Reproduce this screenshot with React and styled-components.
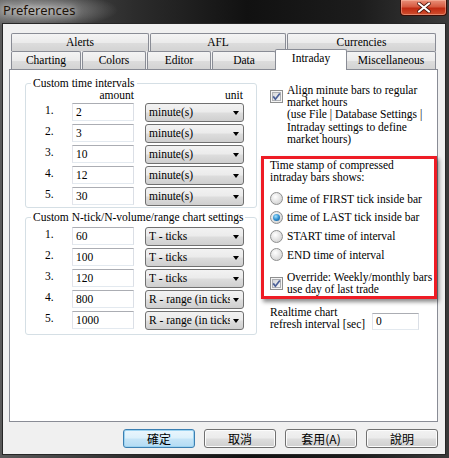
import React from 'react';
import styled, { createGlobalStyle } from 'styled-components';

const GlobalStyle = createGlobalStyle`
  html, body {
    margin: 0;
    padding: 0;
    background: #000;
  }
  * {
    box-sizing: border-box;
  }
`;

const serif = `"Liberation Serif", "Times New Roman", serif`;
const cjk = `"Noto Sans CJK TC", "Noto Sans CJK SC", sans-serif`;

const timeRows = [
  { n: '1.', amount: '2', unit: 'minute(s)' },
  { n: '2.', amount: '3', unit: 'minute(s)' },
  { n: '3.', amount: '10', unit: 'minute(s)' },
  { n: '4.', amount: '12', unit: 'minute(s)' },
  { n: '5.', amount: '30', unit: 'minute(s)' },
];

const tickRows = [
  { n: '1.', amount: '60', unit: 'T - ticks' },
  { n: '2.', amount: '100', unit: 'T - ticks' },
  { n: '3.', amount: '120', unit: 'T - ticks' },
  { n: '4.', amount: '800', unit: 'R - range (in ticks)' },
  { n: '5.', amount: '1000', unit: 'R - range (in ticks)' },
];

const topTabs = [
  { label: 'Alerts', width: 138 },
  { label: 'AFL', width: 136 },
  { label: 'Currencies', width: 149 },
];

const bottomTabs = [
  { label: 'Charting', width: 70 },
  { label: 'Colors', width: 64 },
  { label: 'Editor', width: 64 },
  { label: 'Data', width: 64 },
  { label: 'Intraday', width: 68, active: true },
  { label: 'Miscellaneous', width: 90 },
];

const radios = [
  { label: 'time of FIRST tick inside bar' },
  { label: 'time of LAST tick inside bar', checked: true },
  { label: 'START time of interval' },
  { label: 'END time of interval' },
];

const CheckBox = () => (
  <CheckIcon width="13" height="13" viewBox="0 0 13 13">
    <defs>
      <linearGradient id="cbfill" x1="0" y1="0" x2="1" y2="1">
        <stop offset="0" stopColor="#d4d6d8" />
        <stop offset="1" stopColor="#f8f8f8" />
      </linearGradient>
    </defs>
    <rect x="0.5" y="0.5" width="12" height="12" fill="#f4f4f4" stroke="#8e8f8f" />
    <rect x="2.5" y="2.5" width="8" height="8" fill="url(#cbfill)" stroke="#aeb0b4" />
    <path d="M3.2 6.4 L5.4 9.2 L9.8 3.4" fill="none" stroke="#4a5f97" strokeWidth="1.7" />
  </CheckIcon>
);

const Select = ({ value }) => (
  <SelectBox>
    <SelectText>{value}</SelectText>
    <Arrow />
  </SelectBox>
);

const Group = ({ title, rows, showHeader, tight }) => (
  <Fieldset $tight={tight}>
    <Legend>{title}</Legend>
    {showHeader && (
      <HeaderRow>
        <HeadAmount>amount</HeadAmount>
        <HeadUnit>unit</HeadUnit>
      </HeaderRow>
    )}
    <Rows $header={showHeader}>
      {rows.map((r) => (
        <Row key={r.n}>
          <NumLabel>{r.n}</NumLabel>
          <TextBox>{r.amount}</TextBox>
          <Select value={r.unit} />
        </Row>
      ))}
    </Rows>
  </Fieldset>
);

const App = () => {
  return (
    <>
      <GlobalStyle />
      <Window>
        <TitleBar>
          <Title>Preferences</Title>
          <CloseButton>
            <svg width="14" height="11" viewBox="0 0 14 11">
              <path d="M2 1.5 L12 9.5 M12 1.5 L2 9.5" stroke="#4a1208" strokeWidth="3.6" strokeLinecap="round" />
              <path d="M2 1.5 L12 9.5 M12 1.5 L2 9.5" stroke="#fff" strokeWidth="2.2" strokeLinecap="round" />
            </svg>
          </CloseButton>
        </TitleBar>
        <Body>
          <TabStrip>
            <TabRow>
              {topTabs.map((t) => (
                <Tab key={t.label} $width={t.width}>{t.label}</Tab>
              ))}
            </TabRow>
            <TabRow>
              {bottomTabs.map((t) => (
                <Tab key={t.label} $width={t.width} $active={t.active}>{t.label}</Tab>
              ))}
            </TabRow>
          </TabStrip>
          <Panel>
            <LeftColumn>
              <Group title="Custom time intervals" rows={timeRows} showHeader tight />
              <Group title="Custom N-tick/N-volume/range chart settings" rows={tickRows} />
            </LeftColumn>
            <RightColumn>
              <CheckRow $indent>
                <CheckBox />
                <Label>Align minute bars to regular<br />market hours</Label>
              </CheckRow>
              <Note>(use File | Database Settings |<br />Intraday settings to define<br />market hours)</Note>
              <Highlight>
                <Label>Time stamp of compressed<br />intraday bars shows:</Label>
                <RadioList>
                  {radios.map((r) => (
                    <RadioRow key={r.label}>
                      <Radio $checked={r.checked} />
                      <Label>{r.label}</Label>
                    </RadioRow>
                  ))}
                </RadioList>
                <CheckRow $override>
                  <CheckBox />
                  <Label>Override: Weekly/monthly bars<br />use day of last trade</Label>
                </CheckRow>
              </Highlight>
              <RefreshRow>
                <RefreshLabel>Realtime chart<br />refresh interval [sec]</RefreshLabel>
                <SmallBox>0</SmallBox>
              </RefreshRow>
            </RightColumn>
          </Panel>
          <ButtonRow>
            <Button $default>確定</Button>
            <Button>取消</Button>
            <Button>套用(A)</Button>
            <Button>說明</Button>
          </ButtonRow>
        </Body>
      </Window>
    </>
  );
};

const Window = styled.div`
  width: 449px;
  height: 458px;
  display: flex;
  flex-direction: column;
  background:
    radial-gradient(ellipse 80px 18px at 38px 10px, rgba(190, 190, 190, 0.75), rgba(120, 120, 120, 0) 100%),
    linear-gradient(to right, #5a5a5a 0%, #2c2c2c 30%, #111 55%, #1c1c1c 80%, #3a3a3a 100%);
  overflow: hidden;
`;

const TitleBar = styled.div`
  height: 23px;
  display: flex;
  justify-content: space-between;
  align-items: flex-start;
`;

const Title = styled.div`
  padding: 2px 0 0 3px;
  font-family: "Noto Sans", "Open Sans", sans-serif;
  font-size: 13px;
  line-height: 17px;
  color: #1d1208;
  text-shadow: 0 0 6px rgba(255, 255, 255, 0.7), 0 0 10px rgba(255, 255, 255, 0.5);
`;

const CloseButton = styled.div`
  width: 47px;
  height: 16px;
  margin-right: 2px;
  display: flex;
  align-items: center;
  justify-content: center;
  border: 1px solid #3a0d06;
  border-top: none;
  border-radius: 0 0 4px 4px;
  background: linear-gradient(#e9907a 0%, #d65a40 45%, #c02a12 55%, #d0502f 100%);
  box-shadow: inset 0 0 0 1px rgba(255, 200, 180, 0.45);
`;

const Body = styled.div`
  flex: 1;
  margin: 0 3px 3px 2px;
  border: 1px solid #262626;
  background: #f0f0f0;
  padding: 9px 6px 0 6px;
  display: flex;
  flex-direction: column;
`;

const TabStrip = styled.div`
  padding-left: 2px;
  display: flex;
  flex-direction: column;
`;

const TabRow = styled.div`
  display: flex;
  gap: 1px;
  height: 18px;
`;

const Tab = styled.div`
  position: relative;
  width: ${(p) => (p.$active ? p.$width + 4 : p.$width)}px;
  height: ${(p) => (p.$active ? 21 : 18)}px;
  margin: ${(p) => (p.$active ? '-2px -2px 0 -2px' : '0')};
  z-index: ${(p) => (p.$active ? 2 : 1)};
  border: 1px solid #898c95;
  border-bottom: none;
  border-radius: 2px 2px 0 0;
  background: ${(p) => (p.$active ? '#fff' : 'linear-gradient(#f4f4f4 0%, #ebebeb 50%, #dddddd 51%, #d3d3d3 100%)')};
  font-family: ${serif};
  font-size: 11.5px;
  line-height: 17px;
  text-align: center;
  color: #000;
`;

const Panel = styled.div`
  width: 429px;
  height: 353px;
  border: 1px solid #898c95;
  background: #fff;
  padding: 7px 0 0 15px;
  display: flex;
  gap: 4px;
  font-family: ${serif};
  font-size: 11.5px;
  color: #000;
`;

const LeftColumn = styled.div`
  width: 232px;
  display: flex;
  flex-direction: column;
  gap: 3px;
`;

const Fieldset = styled.fieldset`
  margin: 0;
  padding: 0 0 ${(p) => (p.$tight ? 1 : 4)}px 0;
  min-width: 0;
  border: 1px solid #d5dfe5;
  border-radius: 3px;
`;

const Legend = styled.legend`
  margin-left: 5px;
  padding: 0 2px;
  line-height: 12px;
`;

const HeaderRow = styled.div`
  display: flex;
  height: 12px;
  line-height: 12px;
  padding-left: 46px;
`;

const HeadAmount = styled.div`
  width: 62px;
  text-align: right;
`;

const HeadUnit = styled.div`
  width: 99px;
  margin-left: 11px;
  text-align: right;
  padding-right: 1px;
`;

const Rows = styled.div`
  display: flex;
  flex-direction: column;
  gap: 2px;
  margin-top: ${(p) => (p.$header ? 2 : 4)}px;
`;

const Row = styled.div`
  display: flex;
  align-items: flex-start;
  height: 19px;
  padding-left: 19px;
`;

const NumLabel = styled.div`
  width: 27px;
  line-height: 15px;
`;

const TextBox = styled.div`
  width: 62px;
  height: 18px;
  border: 1px solid #abadb3;
  border-color: #abadb3 #dbdfe6 #e3e9ef #e2e3ea;
  padding-left: 3px;
  line-height: 16px;
  background: #fff;
`;

const SelectBox = styled.div`
  width: 99px;
  height: 19px;
  margin-left: 11px;
  display: flex;
  align-items: center;
  border: 1px solid #707070;
  border-radius: 3px;
  background: linear-gradient(#f2f2f2 0%, #ebebeb 48%, #dddddd 52%, #cfcfcf 100%);
  padding-left: 3px;
`;

const SelectText = styled.div`
  flex: 1;
  overflow: hidden;
  white-space: nowrap;
  line-height: 17px;
`;

const Arrow = styled.div`
  width: 0;
  height: 0;
  margin: 1px 4px 0 3px;
  border-left: 3.5px solid transparent;
  border-right: 3.5px solid transparent;
  border-top: 4px solid #000;
`;

const RightColumn = styled.div`
  width: 176px;
  display: flex;
  flex-direction: column;
  padding-top: 7px;
`;

const CheckIcon = styled.svg`
  flex: none;
  display: block;
`;

const CheckRow = styled.div`
  display: flex;
  align-items: center;
  gap: 4px;
  margin-left: ${(p) => (p.$indent ? 9 : 0)}px;
  margin-top: ${(p) => (p.$override ? 7 : 0)}px;
`;

const Label = styled.div`
  line-height: 12px;
  white-space: nowrap;
`;

const Note = styled.div`
  margin-left: 26px;
  line-height: 12.5px;
  white-space: nowrap;
`;

const Highlight = styled.div`
  margin-top: 10px;
  border: 3px solid #ee1c25;
  padding: 0 0 1px 6px;
  box-shadow: 2px 3px 4px rgba(0, 0, 0, 0.45);
`;

const RadioList = styled.div`
  display: flex;
  flex-direction: column;
  margin-top: 7px;
`;

const RadioRow = styled.div`
  display: flex;
  align-items: center;
  gap: 4px;
  height: 18.67px;
`;

const Radio = styled.div`
  flex: none;
  width: 13px;
  height: 13px;
  border-radius: 50%;
  border: 1px solid #8e8f8f;
  background: radial-gradient(circle at 40% 35%, #ffffff 0%, #e6e6e6 45%, #c8c8c8 100%);
  display: flex;
  align-items: center;
  justify-content: center;
  &::after {
    content: '';
    display: ${(p) => (p.$checked ? 'block' : 'none')};
    width: 7px;
    height: 7px;
    border-radius: 50%;
    background: radial-gradient(circle at 40% 35%, #a6e2fb 0%, #2f8fd0 50%, #0f4f86 100%);
  }
`;

const RefreshRow = styled.div`
  display: flex;
  align-items: flex-end;
  margin-top: 7px;
  padding-left: 9px;
`;

const RefreshLabel = styled.div`
  width: 102px;
  line-height: 12px;
  white-space: nowrap;
`;

const SmallBox = styled(TextBox)`
  width: 47px;
  height: 17px;
  line-height: 15px;
`;

const ButtonRow = styled.div`
  width: 429px;
  display: flex;
  justify-content: flex-end;
  gap: 9px;
  margin-top: 7px;
`;

const Button = styled.div`
  width: 72px;
  height: 19px;
  border: 1px solid ${(p) => (p.$default ? '#3c7fb1' : '#707070')};
  border-radius: 3px;
  background: ${(p) =>
    p.$default
      ? 'linear-gradient(#eaf6fd 0%, #dcf0fb 48%, #c6e5f7 52%, #b3dbf3 100%)'
      : 'linear-gradient(#f2f2f2 0%, #ebebeb 48%, #dddddd 52%, #cfcfcf 100%)'};
  box-shadow: ${(p) => (p.$default ? 'inset 0 0 0 1px #9cd3f1' : 'inset 0 0 0 1px #fcfcfc')};
  font-family: ${cjk};
  font-size: 12px;
  line-height: 17px;
  text-align: center;
  color: #000;
`;

export default App;
